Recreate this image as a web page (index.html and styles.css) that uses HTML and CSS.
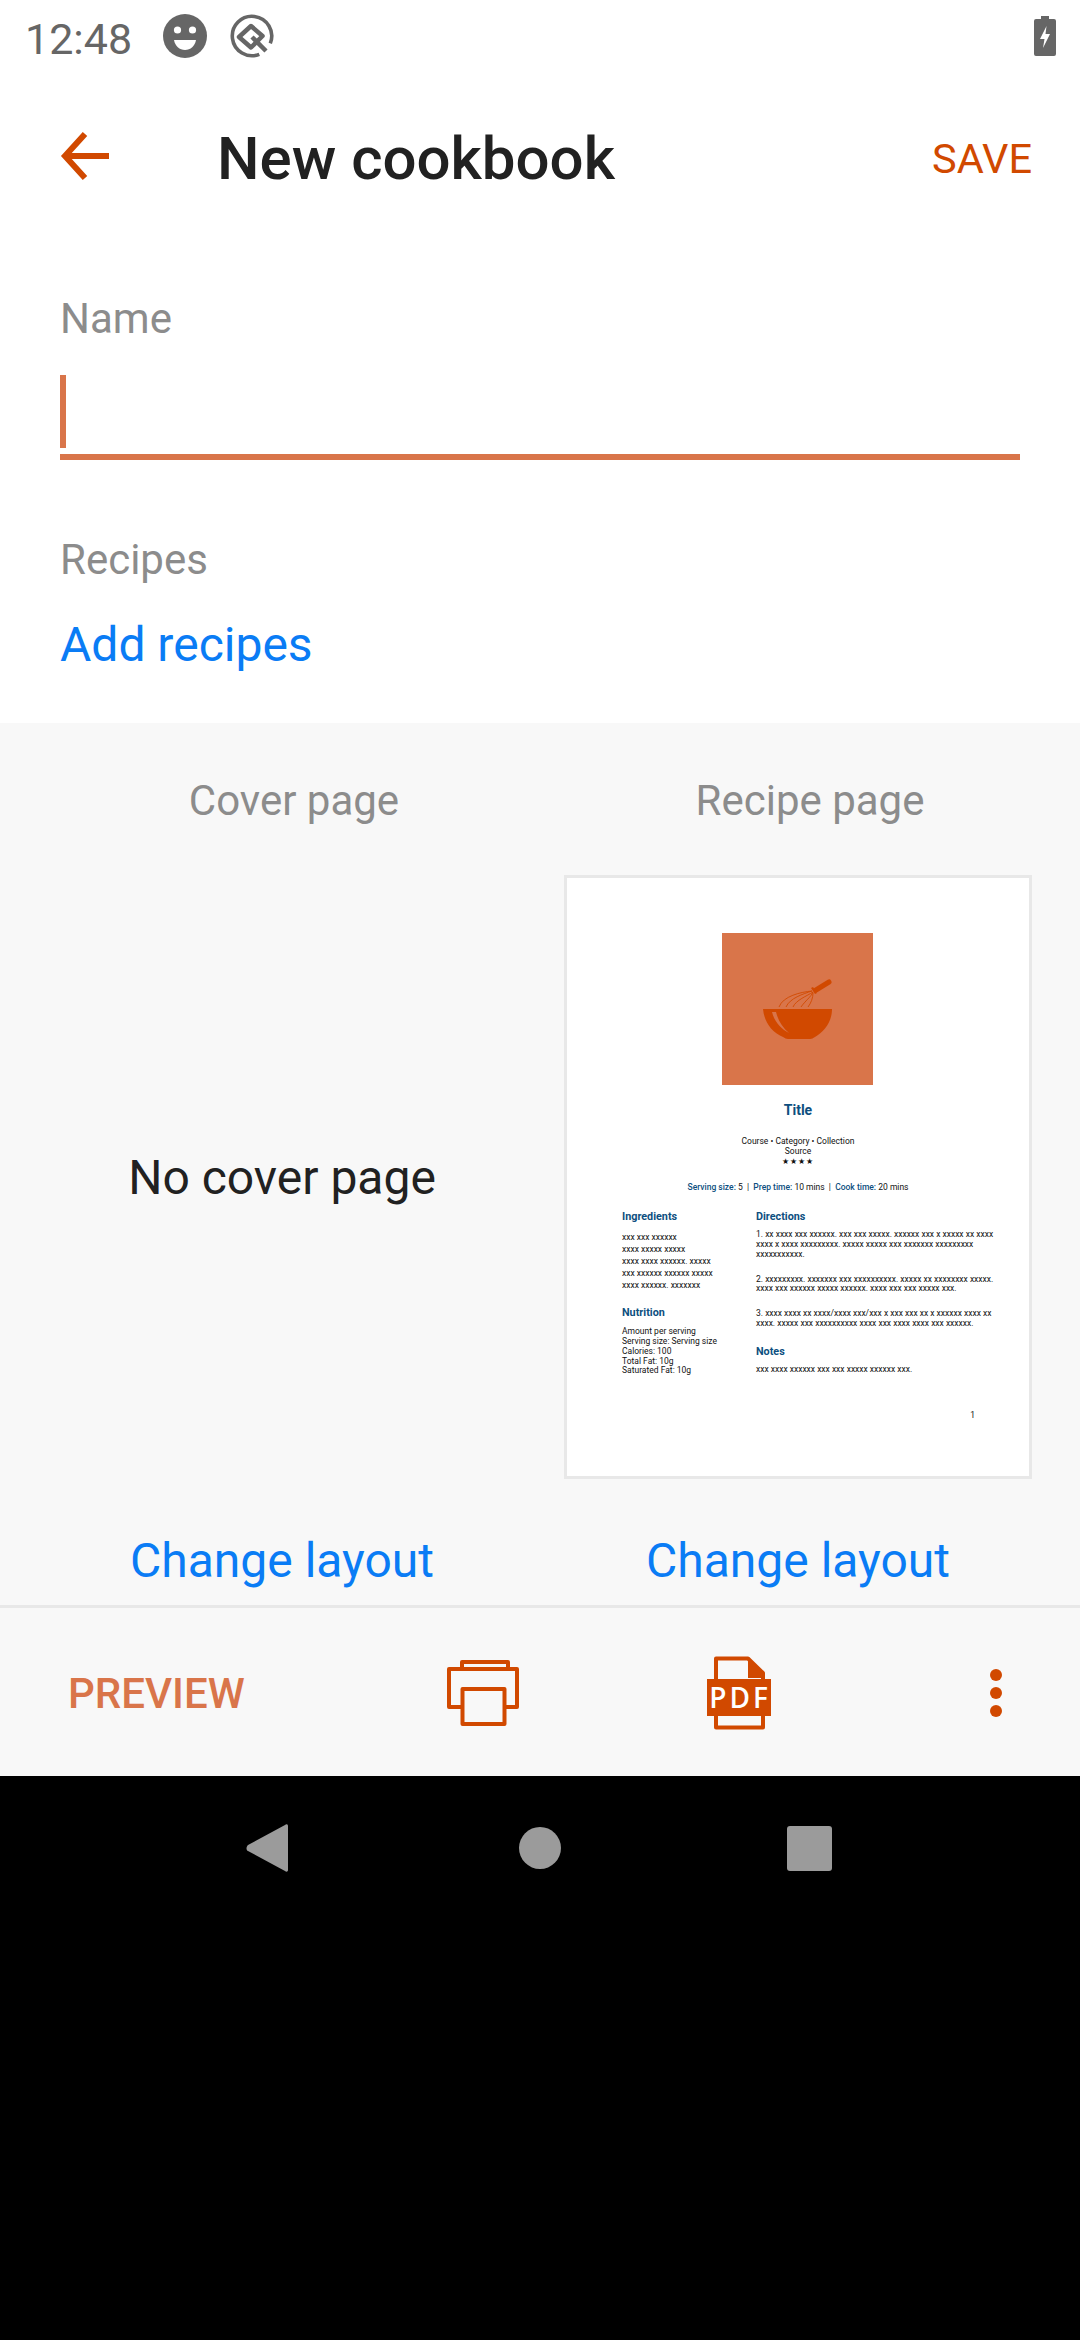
FILE: index.html
```html
<!DOCTYPE html>
<html lang="en">
<head>
    <meta charset="UTF-8">
    <meta name="viewport" content="width=device-width, initial-scale=1.0">
    <title>New cookbook</title>
    <link rel="stylesheet" href="styles.css">
</head>
<body>
    <div class="status-bar">
        <span class="status-time">12:48</span>
        <svg class="status-smiley" width="44" height="44" viewBox="0 0 44 44">
            <circle cx="22" cy="22" r="22" fill="#666"/>
            <circle cx="14.5" cy="16" r="3.6" fill="#fff"/>
            <circle cx="29.5" cy="16" r="3.6" fill="#fff"/>
            <path d="M11 26h22c-1 6-5.500 10-11 10s-10-4-11-10z" fill="#fff"/>
        </svg>
        <svg class="status-q" width="44" height="44" viewBox="0 0 44 44" fill="none" stroke="#666">
            <path d="M29.300 40.300A19.700 19.700 0 1 1 40.300 29.300" stroke-width="3.600"/>
            <path d="M21 12L32.500 22L21 33.500L9 23z" stroke-width="4.500" stroke-linejoin="round"/>
            <path d="M22 23L36 37" stroke-width="4.500"/>
        </svg>
        <svg class="status-battery" width="22" height="40" viewBox="0 0 22 40">
            <path d="M7 0h8v3h5a2 2 0 0 1 2 2v33a2 2 0 0 1-2 2H2a2 2 0 0 1-2-2V5a2 2 0 0 1 2-2h5z" fill="#666"/>
            <path d="M12.500 10L6 23h4.500L9 32l7-14h-4.500z" fill="#fff"/>
        </svg>
    </div>

    <header class="toolbar">
        <svg class="back-icon" width="49" height="48" viewBox="0 0 49 48" fill="none" stroke="#d14900" stroke-width="6">
            <path d="M25 2L5 24l20 22"/>
            <path d="M5 24h44"/>
        </svg>
        <h1 class="toolbar-title">New cookbook</h1>
        <span class="toolbar-save">SAVE</span>
    </header>

    <section class="form">
        <div class="field-label">Name</div>
        <div class="name-input"><span class="cursor"></span></div>
        <div class="field-label recipes-label">Recipes</div>
        <div class="link add-recipes">Add recipes</div>
    </section>

    <section class="layouts">
        <div class="layout-col">
            <div class="layout-heading">Cover page</div>
            <div class="no-cover">No cover page</div>
            <div class="link change-layout">Change layout</div>
        </div>
        <div class="layout-col right">
            <div class="layout-heading">Recipe page</div>
            <div class="page-card">
                <div class="page-photo">
                    <svg width="70" height="62" viewBox="0 0 70 62">
                        <path d="M0 31h69c0 13-8 23-17 28-2 1-3 2-5 2H25c-2 0-3-1-5-2C8 54 1 43 0 31z" fill="#d14900"/>
                        <path d="M9 34h4c2 8 6 15 13 21-8-4-15-12-17-21z" fill="#d9754a"/>
                        <g fill="none" stroke="#d14900" stroke-width="0.900">
                            <path d="M49 13C38 14 20 18 16 29"/>
                            <path d="M49 13C40 16 27 20 23 29"/>
                            <path d="M50 14C44 18 33 22 30 29"/>
                            <path d="M50 14C48 19 42 23 38 29"/>
                            <path d="M50 15C50 20 48 25 45 29"/>
                        </g>
                        <path d="M48 10l4 6 2-1-4-6z" fill="#d14900"/>
                        <path d="M53 12L66 4" stroke="#d14900" stroke-width="5" stroke-linecap="round"/>
                    </svg>
                </div>
                <div class="page-title">Title</div>
                <div class="page-meta">Course • Category • Collection<br>Source<br><span class="page-stars">★★★★</span></div>
                <div class="page-times"><b>Serving size:</b> 5 &nbsp;|&nbsp; <b>Prep time:</b> 10 mins &nbsp;|&nbsp; <b>Cook time:</b> 20 mins</div>
                <div class="page-columns">
                    <div class="page-left">
                        <div class="page-heading">Ingredients</div>
                        <ul class="page-ingredients">
                            <li>xxx xxx xxxxxx</li>
                            <li>xxxx xxxxx xxxxx</li>
                            <li>xxxx xxxx xxxxxx. xxxxx</li>
                            <li>xxx xxxxxx xxxxxx xxxxx</li>
                            <li>xxxx xxxxxx. xxxxxxx</li>
                        </ul>
                        <div class="page-heading nutrition">Nutrition</div>
                        <div class="page-text">Amount per serving<br>Serving size: Serving size<br>Calories: 100<br>Total Fat: 10g<br>Saturated Fat: 10g</div>
                    </div>
                    <div class="page-right">
                        <div class="page-heading">Directions</div>
                        <p class="page-step">1. xx xxxx xxx xxxxxx. xxx xxx xxxxx. xxxxxx xxx x xxxxx xx xxxx xxxx x xxxx xxxxxxxxx. xxxxx xxxxx xxx xxxxxxx xxxxxxxxx xxxxxxxxxxx.</p>
                        <p class="page-step">2. xxxxxxxxx. xxxxxxx xxx xxxxxxxxxx. xxxxx xx xxxxxxxx xxxxx. xxxx xxx xxxxxx xxxxx xxxxxx. xxxx xxx xxx xxxxx xxx.</p>
                        <p class="page-step">3. xxxx xxxx xx xxxx/xxxx xxx/xxx x xxx xxx xx x xxxxxx xxxx xx xxxx. xxxxx xxx xxxxxxxxxx xxxx xxx xxxx xxxx xxx xxxxxx.</p>
                        <div class="page-heading notes">Notes</div>
                        <p class="page-step">xxx xxxx xxxxxx xxx xxx xxxxx xxxxxx xxx.</p>
                    </div>
                </div>
                <div class="page-number">1</div>
            </div>
            <div class="link change-layout">Change layout</div>
        </div>
    </section>

    <div class="action-bar">
        <span class="preview-btn">PREVIEW</span>
        <svg class="print-icon" width="72" height="66" viewBox="0 0 72 66" fill="none" stroke="#d14900" stroke-width="4" stroke-linejoin="round">
            <path d="M15 9V2h46v7"/>
            <path d="M15 47H2V9h68v38H58"/>
            <rect x="15.500" y="29" width="42" height="35" fill="#f8f8f8"/>
        </svg>
        <svg class="pdf-icon" width="66" height="74" viewBox="0 0 66 74">
            <path d="M10 24V2.500h32L57 17v7M10 52v19.500h47V52" fill="none" stroke="#d14900" stroke-width="4" stroke-linejoin="round"/>
            <path d="M42 2l15 15v5H42z" fill="#d14900"/>
            <rect x="1" y="23" width="64" height="37" fill="#d14900"/>
            <text class="pdf-label" x="34" y="52" text-anchor="middle">PDF</text>
        </svg>
        <div class="more-dots"><i></i><i></i><i></i></div>
    </div>

    <nav class="nav-bar">
        <svg class="nav-back" width="42" height="48" viewBox="0 0 42 48">
            <path d="M42 2v44c0 2-2 2-3 1L2 27c-2-1-2-4 0-6L39 1c1-1 3-1 3 1z" fill="#9b9b9b"/>
        </svg>
        <span class="nav-home"></span>
        <span class="nav-recents"></span>
    </nav>
</body>
</html>
```

FILE: styles.css
```css
* {
    box-sizing: border-box;
}
body {
    margin: 0;
    width: 1080px;
    height: 2340px;
    background: #000;
    font-family: Roboto, sans-serif;
    overflow: hidden;
}
.status-bar {
    height: 72px;
    background: #fff;
    display: flex;
    align-items: center;
    padding: 0 24px 0 25px;
}
.status-time {
    font-size: 43px;
    line-height: 72px;
    color: #666;
    width: 138px;
    margin-top: 5px;
    flex-shrink: 0;
}
.status-smiley {
    margin-right: 23px;
}
.status-battery {
    margin-left: auto;
}
.toolbar {
    height: 168px;
    background: #fff;
    display: flex;
    align-items: center;
    padding: 4px 48px 0 60px;
}
.back-icon {
    margin-right: 108px;
    margin-bottom: 4px;
}
.toolbar-title {
    margin: 0;
    font-size: 60px;
    font-weight: 500;
    color: #212121;
}
.toolbar-save {
    margin-left: auto;
    font-size: 41.500px;
    color: #d14900;
}
.form {
    height: 483px;
    background: #fff;
    padding: 51px 60px 0;
}
.field-label {
    font-size: 42px;
    line-height: 56px;
    color: #8c8c8c;
}
.name-input {
    height: 85px;
    margin-top: 28px;
    border-bottom: 6px solid #d9754a;
}
.cursor {
    display: block;
    width: 6px;
    height: 73px;
    background: #d9754a;
}
.recipes-label {
    margin-top: 72px;
}
.link {
    color: #0a7cf5;
    font-size: 48px;
}
.add-recipes {
    margin-top: 27px;
    line-height: 60px;
}
.layouts {
    height: 882px;
    background: #f8f8f8;
    display: flex;
    overflow: hidden;
}
.layout-col {
    width: 564px;
    display: flex;
    flex-direction: column;
    align-items: center;
}
.layout-col.right {
    width: 468px;
}
.layout-heading {
    font-size: 42px;
    line-height: 56px;
    color: #8c8c8c;
    margin-top: 50px;
    margin-left: 24px;
}
.no-cover {
    height: 604px;
    margin-top: 46px;
    font-size: 48px;
    line-height: 606px;
    color: #212121;
}
.change-layout {
    margin-top: 50px;
    line-height: 64px;
}
.page-card {
    width: 468px;
    height: 604px;
    margin-top: 46px;
    background: #fff;
    border: 3px solid #e8e8e8;
    color: #111;
    font-size: 8.500px;
    line-height: 9.800px;
    padding: 55px 0 0;
    display: flex;
    flex-direction: column;
    align-items: center;
}
.page-photo {
    width: 151px;
    height: 152px;
    margin-right: 1px;
    background: #d9754a;
    display: flex;
    align-items: center;
    justify-content: center;
    flex-shrink: 0;
}
.page-title {
    margin-top: 15px;
    color: #0d4f80;
    font-size: 14px;
    line-height: 20px;
    font-weight: 700;
}
.page-meta {
    margin-top: 17px;
    text-align: center;
}
.page-stars {
    font-size: 8px;
    letter-spacing: 1px;
}
.page-times {
    margin-top: 17px;
    white-space: nowrap;
}
.page-times b,
.page-heading {
    color: #0d4f80;
}
.page-times b {
    font-weight: 500;
}
.page-columns {
    align-self: stretch;
    display: flex;
    margin-top: 17px;
    padding: 0 20px 0 55px;
}
.page-left {
    width: 134px;
    flex-shrink: 0;
}
.page-right {
    flex: 1;
}
.page-heading {
    font-size: 10.800px;
    line-height: 14px;
    font-weight: 700;
}
.page-ingredients {
    margin: 7px 0 0;
    padding: 0;
    list-style: none;
    line-height: 12px;
}
.nutrition {
    margin-top: 15px;
}
.page-text {
    margin-top: 7px;
}
.page-step {
    margin: 6px 0 15px;
}
.notes {
    margin-top: 16px;
}
.page-number {
    align-self: flex-end;
    margin-top: 21px;
    margin-right: 54px;
}
.action-bar {
    height: 171px;
    background: #f8f8f8;
    border-top: 3px solid #e8e8e8;
    display: flex;
    align-items: center;
    padding: 2px 0 0 68px;
}
.preview-btn {
    width: 379px;
    font-size: 42px;
    font-weight: 500;
    color: #d9754a;
}
.print-icon {
    margin-right: 187px;
}
.pdf-label {
    font-family: "Open Sans", sans-serif;
    font-size: 28px;
    font-weight: 600;
    fill: #fff;
    letter-spacing: 3px;
}
.pdf-icon {
    margin-right: 218px;
}
.more-dots {
    display: flex;
    flex-direction: column;
    gap: 6px;
}
.more-dots i {
    display: block;
    width: 12px;
    height: 12px;
    border-radius: 50%;
    background: #d14900;
}
.nav-bar {
    display: flex;
    align-items: center;
    height: 96px;
    padding: 24px 0 0 246px;
    box-sizing: content-box;
}
.nav-home {
    width: 42px;
    height: 42px;
    margin-left: 231px;
    border-radius: 50%;
    background: #9b9b9b;
}
.nav-recents {
    width: 45px;
    height: 45px;
    margin-left: 226px;
    border-radius: 3px;
    background: #9b9b9b;
}
```
